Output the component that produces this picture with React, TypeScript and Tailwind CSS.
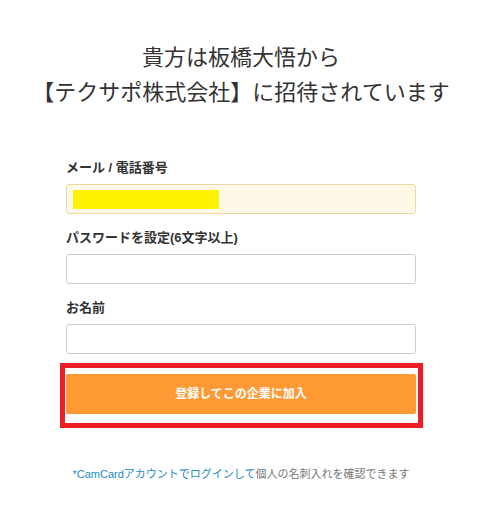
const font = "font-['Liberation_Sans','Noto_Sans_CJK_JP',sans-serif]";

function Field({ label, filled }: { label: string; filled?: boolean }) {
  return (
    <div className="mb-[15px]">
      <div className="mb-[7px] text-[13px] leading-[18px] font-bold text-[#333]">{label}</div>
      {filled ? (
        <div className="flex h-[30px] items-center rounded-[3px] border border-[#ead9a2] bg-[#fff8e6] pl-[6px]">
          <div className="h-[19px] w-[146px] bg-[#fff200]" />
        </div>
      ) : (
        <input className="block h-[30px] w-full rounded-[3px] border border-[#cccccc] bg-white outline-none" />
      )}
    </div>
  );
}

export default function App() {
  return (
    <div className={`${font} min-h-[507px] bg-white`}>
      <div className="ml-[66px] w-[350px] pt-[40px]">
        <div className="flex flex-col items-center text-[22px] leading-[35px] text-[#333]">
          <div className="whitespace-nowrap">貴方は板橋大悟から</div>
          <div className="whitespace-nowrap">【テクサポ株式会社】に招待されています</div>
        </div>

        <div className="mt-[49px]">
          <Field label="メール / 電話番号" filled />
          <Field label="パスワードを設定(6文字以上)" />
          <Field label="お名前" />
        </div>

        <div className="-mt-[6px] ml-[-6px] mr-[-7px] border-[5px] border-[#ee1c24] pt-[6px] pr-[2px] pb-[9px] pl-[1px]">
          <button className="flex h-[40px] w-[350px] items-center justify-center rounded-[2px] bg-[#ff9933] text-[12px] font-bold text-white">
            登録してこの企業に加入
          </button>
        </div>

        <p className="mt-[38px] text-center text-[11px] leading-[16px] whitespace-nowrap">
          <span className="text-[#1a8bc3]">*CamCardアカウントでログインして</span>
          <span className="text-[#777]">個人の名刺入れを確認できます</span>
        </p>
      </div>
    </div>
  );
}
